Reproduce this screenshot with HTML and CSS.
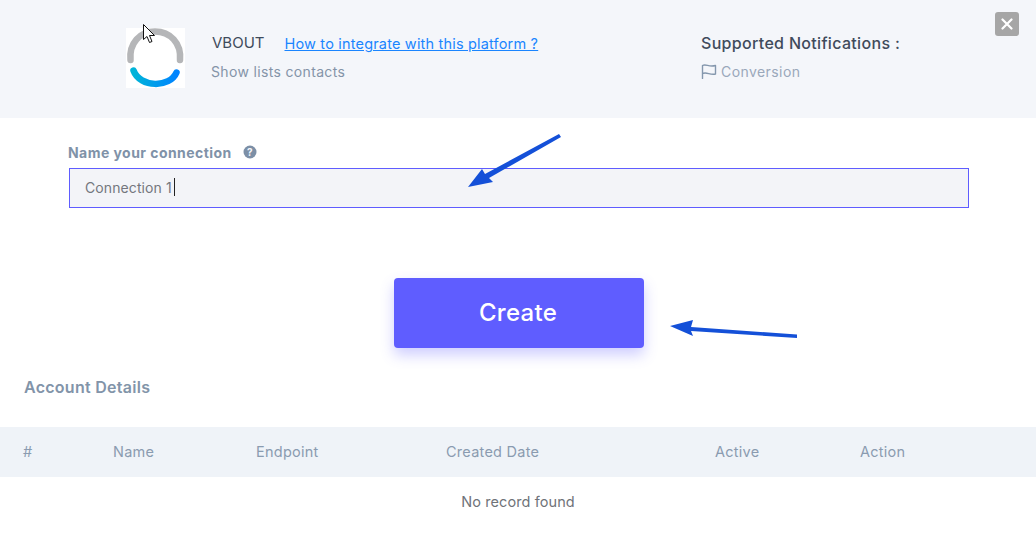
FILE: index.html
```html
<!DOCTYPE html>
<html lang="en">
<head>
<meta charset="utf-8">
<title>VBOUT connection</title>
<link rel="stylesheet" href="styles.css">
</head>
<body>
<div class="modal">
  <header class="head">
    <svg class="logo" width="59" height="60" viewBox="0 0 59 60">
      <defs>
        <linearGradient id="arc" x1="0" y1="0" x2="1" y2="0">
          <stop offset="0" stop-color="#00b4d8"/>
          <stop offset="1" stop-color="#0084ff"/>
        </linearGradient>
      </defs>
      <rect width="59" height="60" fill="#fff"/>
      <path d="M4.500 32 C3 15 14 3.500 29 3.500 C44 3.500 55.500 15 54 32" fill="none" stroke="#b5b6b8" stroke-width="6.500" stroke-linecap="round"/>
      <path d="M7.500 42.500 C14 60 44 60 50.500 44.500" fill="none" stroke="url(#arc)" stroke-width="6.500" stroke-linecap="round"/>
    </svg>
    <div class="info">
      <div class="title-row">
        <span class="vendor">VBOUT</span>
        <a class="help" href="#">How to integrate with this platform ?</a>
      </div>
      <div class="sub">Show lists contacts</div>
    </div>
    <div class="notes">
      <div class="notes-title">Supported Notifications :</div>
      <div class="notes-item">
        <svg width="16" height="16" viewBox="0 0 16 16" fill="none" stroke="#8497ad" stroke-width="1.400" stroke-linejoin="round" stroke-linecap="round"><path d="M1.500 15.500 V2.500 C5 .5 8 4.500 14.500 2.500 V11 C9 12.500 6 8.500 1.500 10.500"/></svg>
        <span>Conversion</span>
      </div>
    </div>
    <button class="close" aria-label="Close">
      <svg width="12" height="12" viewBox="0 0 12 12" stroke="#fff" stroke-width="2.200" stroke-linecap="round"><path d="M1.500 1.500 L10.500 10.500 M10.500 1.500 L1.500 10.500"/></svg>
    </button>
  </header>

  <section class="form">
    <label class="label">Name your connection
      <svg width="14" height="14" viewBox="0 0 14 14"><circle cx="7" cy="7" r="6.500" fill="#7c8fa6"/><text x="7" y="10.500" text-anchor="middle" class="qmark">?</text></svg>
    </label>
    <div class="field">Connection 1<span class="caret"></span></div>
  </section>

  <div class="actions"><button class="create">Create</button></div>

  <h2 class="details">Account Details</h2>

  <div class="thead">
    <span>#</span><span>Name</span><span>Endpoint</span><span>Created Date</span><span>Active</span><span>Action</span>
  </div>
  <div class="empty">No record found</div>

  <svg class="arrow arrow-a" width="100" height="60" viewBox="0 0 100 60">
    <path d="M1 53 L15 35 L18 40 L92 0 L94 3 L22 44 L26 48 Z" fill="#1450d8"/>
  </svg>
  <svg class="arrow arrow-b" width="130" height="24" viewBox="0 0 130 24">
    <path d="M0 6 L23 0 L21 7 L127 14.500 L127 18 L21 11 L23 16 Z" fill="#1450d8"/>
  </svg>
  <svg class="cursor" width="14" height="20" viewBox="0 0 14 20">
    <path d="M.5 .5 V15.500 L4 12.500 L6.500 18.500 L9 17.500 L6.500 11.500 L11.500 11.500 Z" fill="#fff" stroke="#111" stroke-width="1"/>
  </svg>
</div>
</body>
</html>
```
FILE: styles.css
```css
* { box-sizing: border-box; }
html, body { margin: 0; padding: 0; background: #fff; }
body { font-family: "Inter", "Open Sans", sans-serif; overflow: hidden; }
.modal { position: relative; width: 1036px; height: 545px; background: #fff; }

.head { position: relative; display: flex; align-items: flex-start; height: 118px; padding: 28px 0 0 126px; background: #f4f6fa; }
.logo { flex: none; display: block; }
.info { width: 489px; margin-left: 27px; padding-top: 5px; }
.title-row { display: flex; align-items: baseline; gap: 20px; }
.vendor { font-size: 15px; line-height: 20px; color: #3f4b5c; }
.help { position: relative; top: 1px; font-size: 14.500px; letter-spacing: .18px; color: #1a85ff; text-decoration: underline; }
.sub { margin-top: 9px; margin-left: -1px; font-size: 14px; letter-spacing: .34px; line-height: 20px; color: #8494a8; }
.notes { padding-top: 5px; }
.notes-title { font-size: 16px; letter-spacing: .32px; line-height: 20px; font-weight: 500; color: #3f4b5c; }
.notes-item { display: flex; align-items: center; gap: 4px; margin-top: 9px; height: 18px; font-size: 14px; letter-spacing: .43px; color: #9aa8bb; }
.close { position: absolute; top: 12px; left: 995px; display: flex; align-items: center; justify-content: center; width: 24px; height: 24px; padding: 0; border: 0; border-radius: 3px; background: #a6a6a6; }

.form { padding: 25px 67px 0 69px; }
.label { display: flex; align-items: center; gap: 11px; height: 20px; padding-bottom: 2px; margin-left: -1px; font-size: 14px; letter-spacing: .45px; font-weight: 700; color: #8092a8; }
.qmark { font-size: 10px; font-weight: 700; fill: #f4f6fa; font-family: "Inter", sans-serif; }
.field { display: flex; align-items: center; height: 40px; margin-top: 5px; padding: 0 0 2px 15px; border: 1px solid #5f5cff; background: #f3f4f8; font-size: 14px; letter-spacing: .1px; color: #74777e; }
.caret { display: inline-block; width: 1px; height: 18px; margin-left: 2px; background: #222; }

.actions { display: flex; justify-content: center; margin-top: 70px; padding-left: 2px; }
.create { width: 250px; height: 70px; padding: 0 2px 2px 0; border: 0; border-radius: 4px; background: #5f5dff; color: #fff; font-family: inherit; font-size: 24px; letter-spacing: .3px; font-weight: 500; box-shadow: 0 7px 14px rgba(95, 93, 255, .3); }

.details { margin: 29px 0 0 24px; font-size: 16px; letter-spacing: .27px; line-height: 20px; font-weight: 600; color: #8294a9; }

.thead { display: grid; grid-template-columns: 90px 143px 190px 269px 145px 1fr; align-items: center; height: 50px; margin-top: 30px; padding: 0 0 2px 23px; background: #eff3f8; font-size: 14.500px; letter-spacing: .25px; color: #8a9bb0; }
.empty { display: flex; align-items: center; justify-content: center; height: 50px; padding-bottom: 2px; font-size: 14.500px; letter-spacing: .1px; color: #6f7379; }

.arrow { position: absolute; }
.arrow-a { left: 467px; top: 134px; }
.arrow-b { left: 670px; top: 320px; }
.cursor { position: absolute; left: 143px; top: 24px; }
```
